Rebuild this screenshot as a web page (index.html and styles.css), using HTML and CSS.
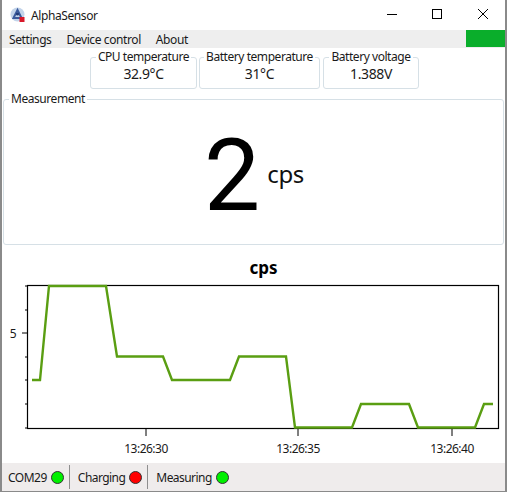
FILE: index.html
```html
<!DOCTYPE html>
<html lang="en">
<head>
  <meta charset="UTF-8">
  <meta name="viewport" content="width=device-width, initial-scale=1.0">
  <title>AlphaSensor</title>
  <link rel="stylesheet" href="styles.css">
</head>
<body>
  <div class="window">
    <div class="titlebar">
      <svg class="app-icon" width="16" height="16" viewBox="0 0 16 16">
        <circle cx="7.5" cy="7.5" r="7" fill="#c3d4ea"/>
        <path d="M7.5 3 L11.5 11 L3.5 11 Z" fill="none" stroke="#3a5a9c" stroke-width="2"/>
        <circle cx="7.5" cy="7" r="1.6" fill="#1f3a78"/>
        <rect x="9.5" y="10" width="5" height="5" fill="#d8182a"/>
      </svg>
      <span class="app-title">AlphaSensor</span>
      <div class="window-controls">
        <svg width="46" height="30" viewBox="0 0 46 30"><path d="M20 14.5 H30" stroke="#000" stroke-width="1"/></svg>
        <svg width="46" height="30" viewBox="0 0 46 30"><rect x="19.5" y="9.5" width="9" height="9" fill="none" stroke="#000"/></svg>
        <svg width="46" height="30" viewBox="0 0 46 30"><path d="M19 9 L29 19 M29 9 L19 19" stroke="#000" stroke-width="1"/></svg>
      </div>
    </div>

    <div class="menubar">
      <span class="menu-item">Settings</span>
      <span class="menu-item">Device control</span>
      <span class="menu-item">About</span>
      <div class="conn-indicator"></div>
    </div>

    <div class="info-row">
      <fieldset class="info-box box-cpu">
        <legend>CPU temperature</legend>
        <div class="info-value">32.9°C</div>
      </fieldset>
      <fieldset class="info-box box-temp">
        <legend>Battery temperature</legend>
        <div class="info-value">31°C</div>
      </fieldset>
      <fieldset class="info-box box-volt">
        <legend>Battery voltage</legend>
        <div class="info-value">1.388V</div>
      </fieldset>
    </div>

    <fieldset class="measurement">
      <legend>Measurement</legend>
      <div class="reading">
        <span class="reading-value">2</span>
        <span class="reading-unit">cps</span>
      </div>
    </fieldset>

    <div class="chart">
      <div class="chart-title">cps</div>
      <svg class="chart-svg" width="503" height="190" viewBox="2 274 503 190">
        <rect x="27.5" y="285.5" width="471" height="143" fill="none" stroke="#000" stroke-width="1.2"/>
        <path d="M25 286H27 M25 310H27 M22 333H27 M25 357H27 M25 380H27 M25 404H27 M25 428H27" stroke="#000"/>
        <path d="M146 429V436 M298 429V436 M452 429V436" stroke="#000"/>
        <polyline fill="none" stroke="#5a9e12" stroke-width="2.4" points="32,380 40,380 49,286 106,286 117,356.5 163,356.5 172,380 230,380 239,356.5 286,356.5 295,427.5 352,427.5 361,404 409,404 418,427.5 475,427.5 484,404 493,404"/>
        <text class="axis-label" x="13" y="338" text-anchor="middle">5</text>
        <text class="axis-label" x="146" y="453" text-anchor="middle">13:26:30</text>
        <text class="axis-label" x="298" y="453" text-anchor="middle">13:26:35</text>
        <text class="axis-label" x="452" y="453" text-anchor="middle">13:26:40</text>
      </svg>
    </div>

    <div class="statusbar">
      <div class="status-item item-com">COM29 <span class="led led-on"></span></div>
      <div class="status-item item-charge">Charging <span class="led led-off"></span></div>
      <div class="status-item item-measure">Measuring <span class="led led-on"></span></div>
    </div>
  </div>
</body>
</html>
```

FILE: styles.css
```css
body {
  margin: 0;
  background-color: #ffffff;
  font-family: "Noto Sans", "Open Sans", sans-serif;
  font-size: 12px;
  color: #1a1a1a;
}

.window {
  box-sizing: border-box;
  width: 507px;
  height: 492px;
  display: flex;
  flex-direction: column;
  background-color: #ffffff;
  border-left: 2px solid #8a8a8a;
  border-right: 2px solid #8a8a8a;
  border-bottom: 1px solid #8a8a8a;
  overflow: hidden;
}

.titlebar {
  height: 30px;
  flex: none;
  display: flex;
  align-items: center;
  padding-left: 8px;
}

.app-title {
  margin-left: 5px;
  letter-spacing: -0.4px;
}

.window-controls {
  margin-left: auto;
  display: flex;
}

.menubar {
  height: 18px;
  flex: none;
  display: flex;
  align-items: center;
  background-color: #eeeeee;
  padding-left: 7px;
  gap: 15px;
}

.menu-item {
  letter-spacing: -0.4px;
}

.conn-indicator {
  margin-left: auto;
  width: 39px;
  height: 17px;
  align-self: flex-start;
  background-color: #0aae2b;
}

.info-row {
  flex: none;
  display: flex;
  gap: 2px;
  margin-top: 2px;
  padding-left: 88px;
}

fieldset {
  margin: 0;
  padding: 0;
  box-sizing: border-box;
  border: 1px solid #d6e0e6;
  border-radius: 3px;
  min-width: 0;
}

legend {
  padding: 0 2px;
  line-height: 14px;
  letter-spacing: -0.45px;
}

.info-box {
  height: 39px;
  text-align: center;
}

.info-box legend {
  margin: 0 auto;
}

.box-cpu { width: 107px; }
.box-temp { width: 121px; }
.box-volt { width: 96px; margin-left: 1px; }

.info-value {
  font-size: 14px;
  line-height: 16px;
  margin-top: 2px;
  letter-spacing: -0.4px;
}

.measurement {
  flex: none;
  height: 153px;
  margin: 3px 0 0 1px;
  width: 501px;
}

.measurement legend {
  margin-left: 5px;
}

.reading {
  display: flex;
  justify-content: center;
  align-items: flex-start;
  padding: 10px 0 0 1px;
}

.reading-value {
  font-family: Roboto, "Noto Sans", sans-serif;
  font-size: 100px;
  line-height: 120px;
  color: #000000;
}

.reading-unit {
  font-size: 24px;
  line-height: 30px;
  margin: 43px 0 0 7px;
  letter-spacing: -0.3px;
  color: #111111;
}

.chart {
  flex: 1;
  min-height: 0;
}

.chart-title {
  text-align: center;
  font-size: 17px;
  font-weight: 700;
  line-height: 20px;
  margin-top: 13px;
  padding-left: 20px;
  color: #000000;
}

.chart-svg {
  display: block;
  margin-top: -4px;
}

.axis-label {
  font-size: 12px;
  letter-spacing: -0.5px;
  fill: #1a1a1a;
}

.statusbar {
  flex: none;
  height: 28px;
  display: flex;
  align-items: center;
  background-color: #efecec;
}

.status-item {
  display: flex;
  align-items: center;
  gap: 4px;
  height: 24px;
  padding: 0 5px 0 8px;
  letter-spacing: -0.55px;
  border-right: 1px solid #8f8f8f;
}

.item-com {
  padding-left: 6px;
  letter-spacing: -0.5px;
}

.item-measure {
  border-right: none;
}

.led {
  box-sizing: border-box;
  width: 13px;
  height: 13px;
  border-radius: 50%;
  border: 1px solid #333333;
}

.led-on {
  background-color: #00f000;
}

.led-off {
  background-color: #ff0000;
}
```
